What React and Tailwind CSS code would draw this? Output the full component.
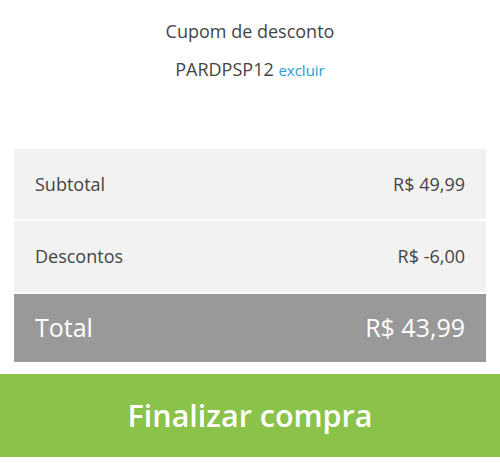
import React from 'react';

const Row = ({ label, value, height }) => (
  <div className={`flex ${height} items-center justify-between bg-[#f2f2f2] px-[21px] text-[18px] text-[#444]`}>
    <span>{label}</span>
    <span>{value}</span>
  </div>
);

const App = () => {
  return (
    <div className="h-[463px] w-[500px] bg-white font-['Open_Sans',sans-serif]">
      {/* Coupon */}
      <div className="flex flex-col items-center pt-[19px] text-[#444]">
        <p className="text-[18px] leading-[24px]">Cupom de desconto</p>
        <p className="mt-[14px] text-[18px] leading-[24px]">
          PARDPSP12 <span className="text-[15px] text-[#2a9bd0]">excluir</span>
        </p>
      </div>

      {/* Summary */}
      <div className="mx-[14px] mt-[67px] flex flex-col gap-[2px]">
        <Row label="Subtotal" value="R$ 49,99" height="h-[70px]" />
        <Row label="Descontos" value="R$ -6,00" height="h-[71px]" />
        <div className="flex h-[68px] items-center justify-between bg-[#999] px-[21px] text-[25px] text-white">
          <span>Total</span>
          <span>R$ 43,99</span>
        </div>
      </div>

      <button className="mt-[12px] flex h-[83px] w-full items-center justify-center bg-[#8bc34a] text-[30.5px] font-semibold text-white">
        Finalizar compra
      </button>
    </div>
  );
};

export default App;
